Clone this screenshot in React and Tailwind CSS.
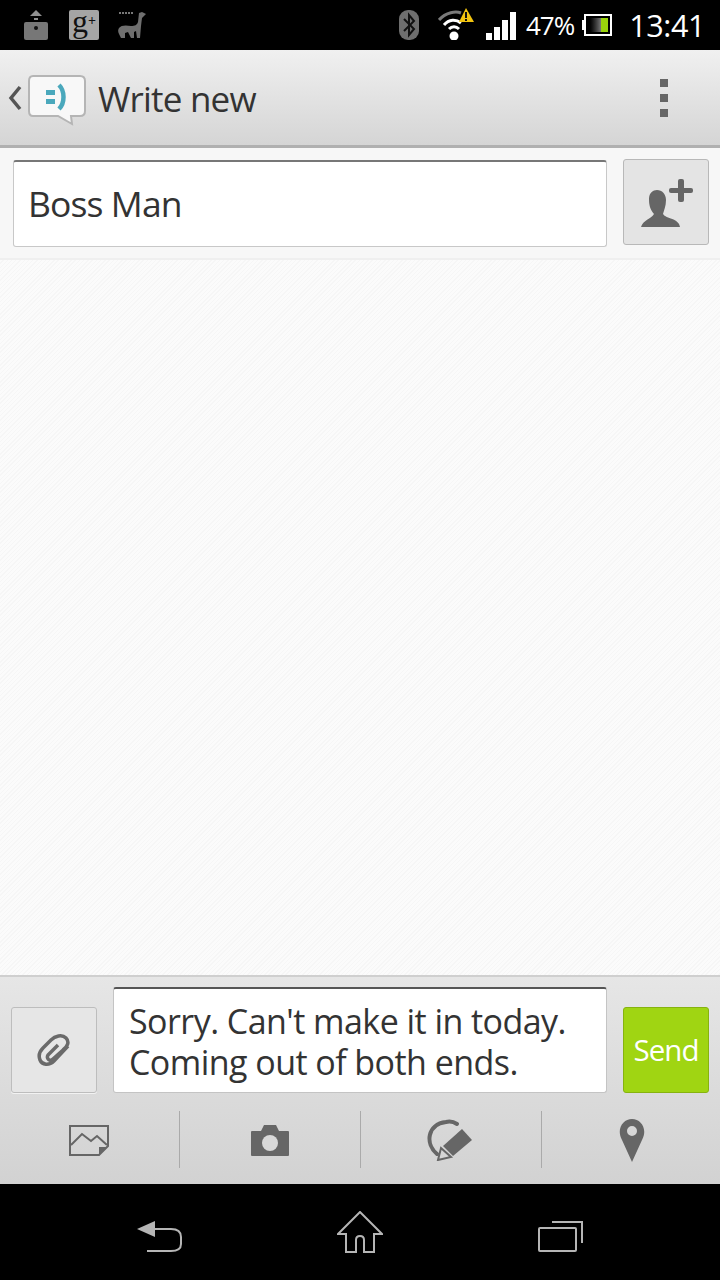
const Svg = ({ w, h, className, children }) => (
  <svg width={w} height={h} viewBox={`0 0 ${w} ${h}`} className={className} fill="none">
    {children}
  </svg>
);

const StatusBar = () => (
  <div className="h-[50px] bg-black flex items-center shrink-0 relative">
    {/* left notification icons */}
    <div className="flex items-center ml-[24px]">
      <Svg w={24} h={32} className="mt-[-1px]">
        <path d="M12 1 L18 7 H6 Z" fill="#8f8f8f" />
        <rect x="10" y="9" width="4" height="2" fill="#8f8f8f" />
        <rect y="13" width="24" height="18" rx="2" fill="#777" />
        <circle cx="12" cy="19" r="2" fill="#111" />
      </Svg>
      <div className="ml-[21px] w-[30px] h-[30px] rounded-[2px] bg-[#a5a5a5] flex items-center justify-center text-[#111] text-[32px] leading-none font-['Liberation_Serif',serif] pb-[8px]">
        g<span className="text-[14px] font-bold">+</span>
      </div>
      <Svg w={28} h={30} className="ml-[19px]">
        <path d="M1 3h14" stroke="#777" strokeWidth="2" strokeDasharray="2 1" />
        <path d="M28 4 L24 2 L21 3 L20 12 C19 15 17 16 13 16 C8 15 3 15 1 18 C-1 21 1 24 2 26 L3 28 H7 L7 23 L10 22 L13 28 H16 L16 22 L18 21 L19 28 H22 L23 16 L24 8 Z" fill="#6f6f6f" />
      </Svg>
    </div>
    <div className="flex-1" />
    {/* right system icons */}
    <Svg w={20} h={30} className="mr-[19px]">
      <rect width="20" height="30" rx="9" fill="#6e6e6e" />
      <path d="M5 9 L15 19 L10 25 V5 L15 11 L5 21" stroke="#111" strokeWidth="2" />
    </Svg>
    <Svg w={36} h={32} className="mt-[-3px] mr-[12px]">
      <path d="M1 12 C8 4 18 3 23 5" stroke="#7a7a7a" strokeWidth="3" />
      <path d="M6 17 C11 11 18 11 23 15" stroke="#fff" strokeWidth="3" />
      <path d="M11 21 C14 18 18 18 21 21" stroke="#fff" strokeWidth="3" />
      <circle cx="16" cy="28" r="4.5" fill="#fff" />
      <path d="M28 0 L36 14 H21 Z" fill="#f2c40f" />
      <rect x="27" y="4" width="2" height="6" fill="#111" />
      <rect x="27" y="11" width="2" height="2" fill="#111" />
    </Svg>
    <Svg w={30} h={28} className="mt-[2px]">
      <rect x="0" y="21" width="6" height="7" fill="#fff" />
      <rect x="8" y="15" width="6" height="13" fill="#fff" />
      <rect x="16" y="8" width="6" height="20" fill="#fff" />
      <rect x="24" y="0" width="6" height="28" fill="#fff" />
    </Svg>
    <span className="ml-[10px] text-white text-[26px] tracking-[-1px] leading-none font-['Open_Sans',sans-serif]">47%</span>
    <div className="ml-[8px] flex items-center">
      <div className="w-[2px] h-[10px] bg-white" />
      <div className="w-[28px] h-[22px] border-[2px] border-white p-[2px] flex">
        <div className="w-[13px] bg-gradient-to-r from-black to-[#777]" />
        <div className="flex-1 bg-[#9ad40b]" />
      </div>
    </div>
    <span className="ml-[17px] mr-[15px] text-white text-[30.5px] tracking-[-0.4px] leading-none font-['Open_Sans',sans-serif]">13:41</span>
  </div>
);

const ActionBar = () => (
  <div className="h-[98px] shrink-0 flex items-center bg-gradient-to-b from-[#f0f0f0] to-[#d5d5d5] border-b-[3px] border-[#b0b0b0]">
    <Svg w={14} h={26} className="ml-[8px]">
      <path d="M12 2 L3 13 L12 24" stroke="#555" strokeWidth="3.5" />
    </Svg>
    <Svg w={58} h={52} className="ml-[6px] mt-[6px]">
      <path d="M5 1 H52 Q57 1 57 6 V36 Q57 41 52 41 H43 L44 49 L30 41 H5 Q1 41 1 36 V6 Q1 1 5 1 Z" fill="#f8f8f8" stroke="#b5b5b5" strokeWidth="2" />
      <rect x="18" y="15" width="9" height="5" fill="#4aa8bc" />
      <rect x="18" y="24" width="9" height="5" fill="#4aa8bc" />
      <path d="M31 10 C37 16 37 28 31 34" stroke="#4aa8bc" strokeWidth="4.5" />
    </Svg>
    <span className="ml-[12px] mt-[2px] text-[35px] tracking-[-0.8px] text-[#333] leading-none font-['Open_Sans',sans-serif]">Write new</span>
    <div className="flex-1" />
    <div className="mr-[52px] flex flex-col gap-[7px]">
      <div className="w-[8px] h-[8px] bg-[#666]" />
      <div className="w-[8px] h-[8px] bg-[#666]" />
      <div className="w-[8px] h-[8px] bg-[#666]" />
    </div>
  </div>
);

const Composer = () => (
  <div className="h-[209px] shrink-0 bg-gradient-to-b from-[#e6e6e6] to-[#d2d2d2] border-t-[2px] border-[#cfcfcf]">
    <div className="flex items-end pt-[10px] pl-[11px] pr-[11px]">
      <div className="w-[86px] h-[86px] rounded-[3px] border border-[#bdbdbd] bg-[#e6e6e6] shadow-[0_1px_0_#f2f2f2] flex items-center justify-center">
        <Svg w={34} h={34}>
          <path d="M31 13 L17 28 C12 33 5 32 3 27 C1 22 3 18 6 15 L14 7 C18 3 25 1 29 5 C33 9 30 14 26 17 L16 26 C13 29 9 26 11 22 L21 12" stroke="#6a6a6a" strokeWidth="3.5" />
        </Svg>
      </div>
      <div className="ml-[16px] w-[494px] h-[106px] bg-white rounded-[3px] border border-[#c4c4c4] border-t-[2px] border-t-[#555] pl-[15px] pt-[12px] text-[34px] tracking-[-0.55px] leading-[41px] text-[#333] font-['Open_Sans',sans-serif]">
        <div>Sorry. Can't make it in today.</div>
        <div>Coming out of both ends.</div>
      </div>
      <div className="ml-[16px] w-[86px] h-[86px] rounded-[3px] bg-[#a0d512] border border-[#86b30f] flex items-center justify-center text-white text-[29.5px] tracking-[-1px] font-['Open_Sans',sans-serif]">
        Send
      </div>
    </div>
    <div className="flex mt-[18px] h-[57px]">
      <div className="w-[180px] flex items-center justify-center border-r border-[#aaa]">
        <Svg w={40} h={32} className="ml-[-2px]">
          <path d="M1 2 H39 V22 L30 31 H1 Z" stroke="#666" strokeWidth="2" />
          <path d="M2 21 L13 10 L22 17 L28 12 L38 21" stroke="#666" strokeWidth="2" />
          <path d="M30 31 V23 H38 Z" fill="#666" />
        </Svg>
      </div>
      <div className="w-[181px] flex items-center justify-center border-r border-[#aaa]">
        <Svg w={38} h={32}>
          <path d="M1 7 H10 L13 1 H25 L28 7 H37 Q38 7 38 8 V31 Q38 32 37 32 H1 Q0 32 0 31 V8 Q0 7 1 7 Z" fill="#666" />
          <circle cx="19" cy="19" r="8" fill="#d8d8d8" />
        </Svg>
      </div>
      <div className="w-[181px] flex items-center justify-center border-r border-[#aaa]">
        <Svg w={46} h={42} className="ml-[-4px]">
          <path d="M11 35 C-1 25 1 5 20 3 C24 2 28 3 31 5" stroke="#666" strokeWidth="4" strokeLinecap="round" />
          <path d="M36 10 L46 21 L27 37 L17 27 Z" fill="#666" />
          <path d="M15 29 L25 38 L12 41 Z" stroke="#666" strokeWidth="2" />
        </Svg>
      </div>
      <div className="flex-1 flex items-center justify-center">
        <Svg w={26} h={44} className="ml-[2px]">
          <path fillRule="evenodd" d="M13 44 L3 22 C-3 11 4 1 13 1 C22 1 29 11 23 22 Z M13 8 A5 5 0 1 0 13 18 A5 5 0 1 0 13 8 Z" fill="#666" />
        </Svg>
      </div>
    </div>
  </div>
);

const NavBar = () => (
  <div className="h-[96px] shrink-0 bg-black flex items-start pt-[20px]">
    <Svg w={46} h={34} className="ml-[137px] mt-[16px]">
      <path d="M0 9 L18 1 V17 Z" fill="#b5b5b5" />
      <path d="M16 9 H34 Q44 9 44 17 V24 Q44 31 34 31 H10" stroke="#b5b5b5" strokeWidth="2" />
    </Svg>
    <Svg w={46} h={42} className="ml-[154px] mt-[7px]">
      <path d="M1 23 L23 1 L45 23 H37 V41 H27 V29 Q27 25 23 25 Q19 25 19 29 V41 H9 V23 Z" stroke="#b5b5b5" strokeWidth="2" />
    </Svg>
    <Svg w={45} h={31} className="ml-[155px] mt-[17px]">
      <rect x="1" y="7" width="37" height="23" rx="1" stroke="#b5b5b5" strokeWidth="2" />
      <path d="M14 1 H44 V22" stroke="#b5b5b5" strokeWidth="2" />
    </Svg>
  </div>
);

export default function App() {
  return (
    <div className="w-[720px] h-[1280px] flex flex-col overflow-hidden bg-[#f7f7f7]">
      <StatusBar />
      <ActionBar />

      {/* recipient row */}
      <div className="h-[112px] shrink-0 flex items-start pl-[13px] pt-[11px] bg-[#f7f7f7] border-b-[2px] border-[#efefef]">
        <div className="w-[594px] h-[87px] mt-[1px] bg-white rounded-[3px] border border-[#c8c8c8] border-t-[2px] border-t-[#777] pl-[14px] flex items-center text-[35.5px] tracking-[-0.9px] text-[#333] font-['Open_Sans',sans-serif]">
          Boss Man
        </div>
        <div className="ml-[16px] w-[86px] h-[86px] rounded-[3px] border border-[#b8b8b8] bg-[#e4e4e4] flex items-center justify-center">
          <Svg w={52} h={48} className="mt-[2px] ml-[2px]">
            <path d="M0 48 C2 41 10 40 13 35 C9 30 8 26 8 20 C8 14 12 11 16 11 C21 11 25 15 25 21 C25 27 23 31 22 35 C25 40 38 39 39 48 Z" fill="#666" />
            <rect x="28" y="9" width="24" height="5" rx="2" fill="#666" />
            <rect x="37" y="0" width="6" height="23" rx="2" fill="#666" />
          </Svg>
        </div>
      </div>

      {/* empty conversation */}
      <div className="flex-1 min-h-0 bg-[repeating-linear-gradient(135deg,#fbfbfb_0px,#fbfbfb_2px,#f6f6f6_2px,#f6f6f6_3px)]" />

      <Composer />
      <NavBar />
    </div>
  );
}
